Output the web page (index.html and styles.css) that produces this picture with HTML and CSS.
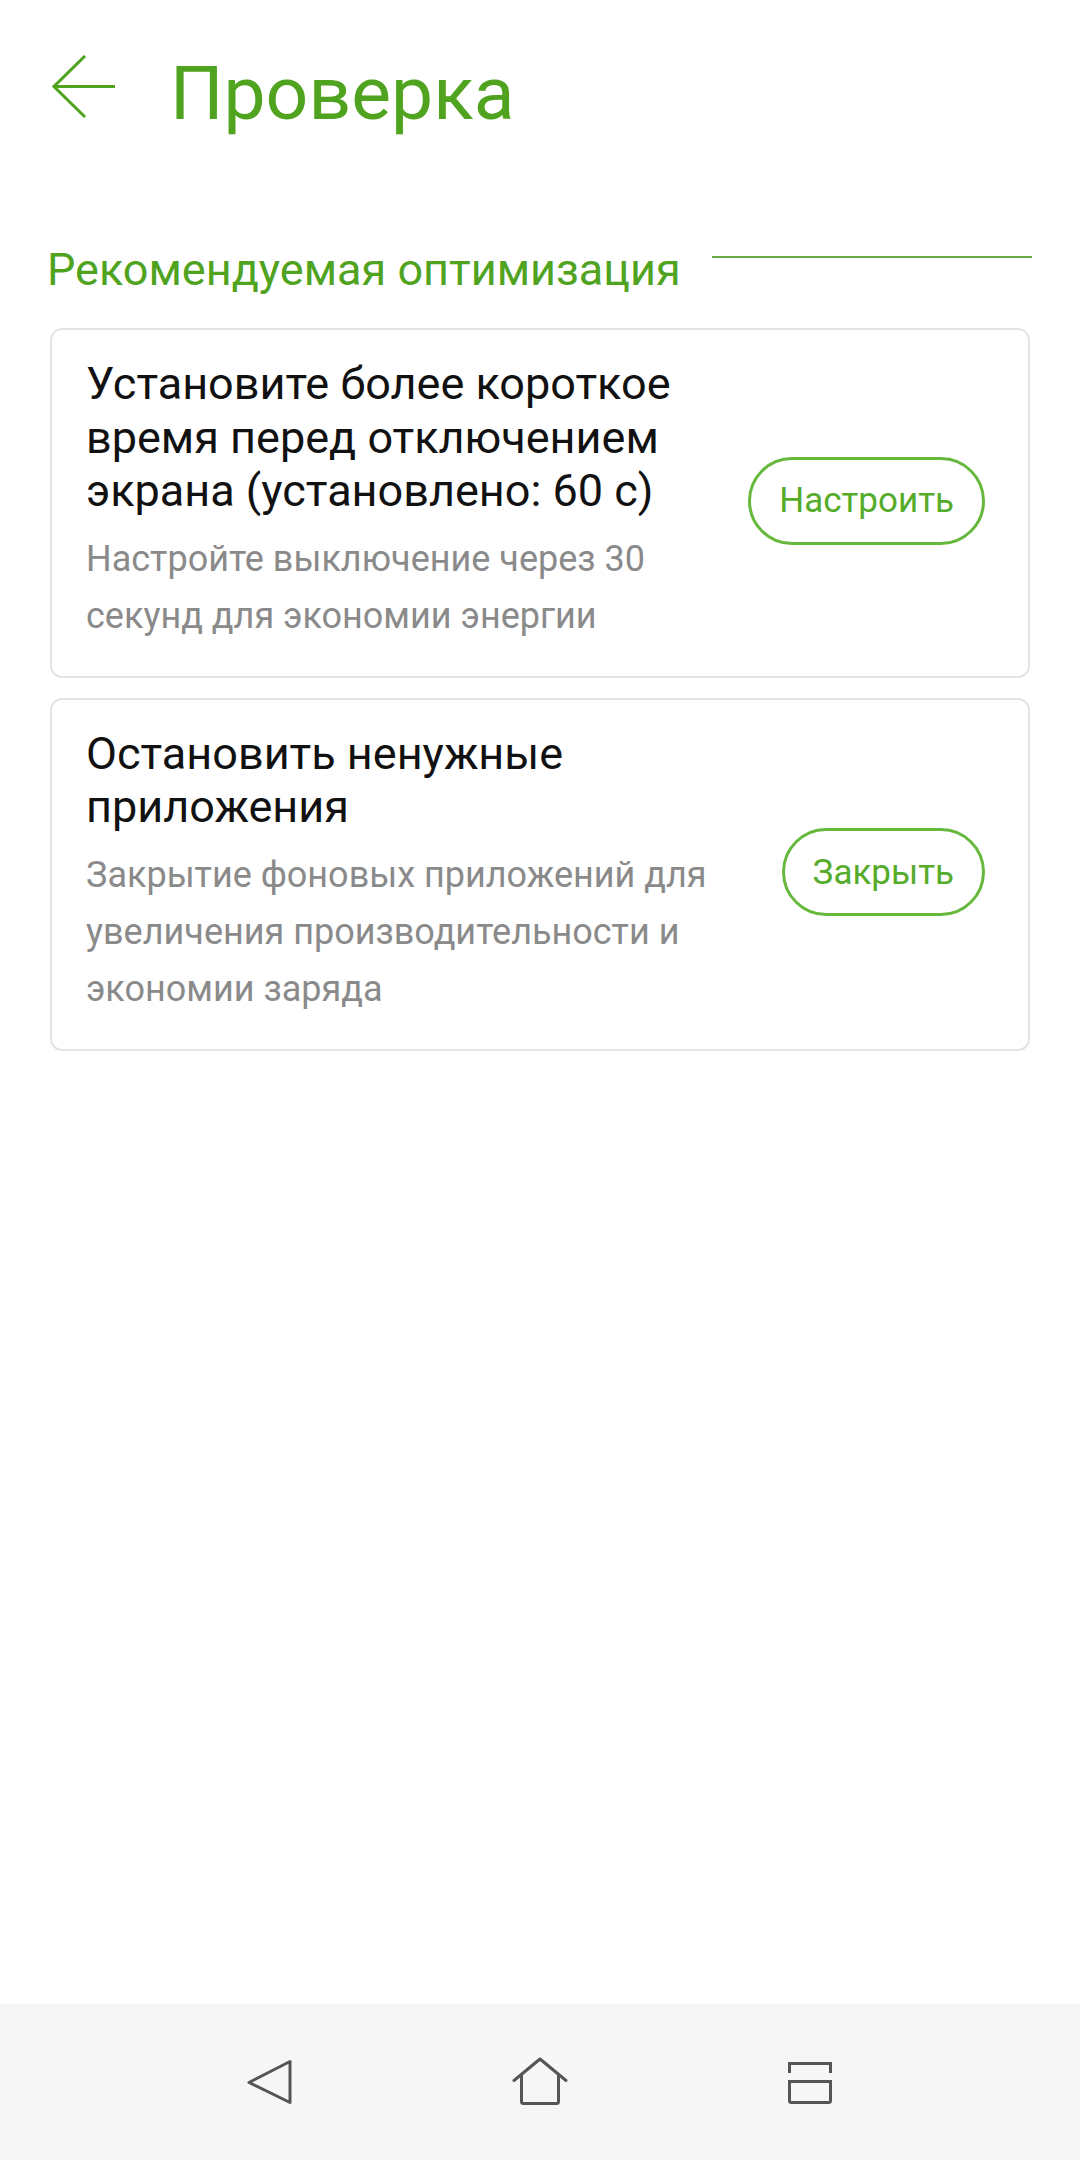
FILE: index.html
```html
<!DOCTYPE html>
<html lang="ru">
<head>
    <meta charset="UTF-8">
    <meta name="viewport" content="width=device-width, initial-scale=1.0">
    <title>Проверка</title>
    <link rel="stylesheet" href="styles.css">
</head>
<body>
    <header class="toolbar">
        <svg class="back" width="64" height="64" viewBox="0 0 64 64" fill="none" stroke="currentColor" stroke-width="3">
            <path d="M33 1L2 31.5L33 62"/>
            <path d="M2 31.5H63"/>
        </svg>
        <h1 class="title">Проверка</h1>
    </header>

    <main>
        <div class="section-head">
            <span class="section-title">Рекомендуемая оптимизация</span>
            <span class="section-line"></span>
        </div>

        <div class="card">
            <div class="card-text">
                <div class="card-title">Установите более короткое время перед отключением экрана (установлено: 60 с)</div>
                <div class="card-desc">Настройте выключение через 30 секунд для экономии энергии</div>
            </div>
            <button class="pill">Настроить</button>
        </div>

        <div class="card">
            <div class="card-text">
                <div class="card-title">Остановить ненужные приложения</div>
                <div class="card-desc">Закрытие фоновых приложений для увеличения производительности и экономии заряда</div>
            </div>
            <button class="pill">Закрыть</button>
        </div>
    </main>

    <nav class="navbar">
        <div class="nav-btn">
            <svg width="60" height="60" viewBox="0 0 60 60" fill="none" stroke="currentColor" stroke-width="3" stroke-linejoin="round">
                <path d="M9 30.5L50 9.5V50.5Z"/>
            </svg>
        </div>
        <div class="nav-btn">
            <svg width="60" height="60" viewBox="0 0 60 60" fill="none" stroke="currentColor" stroke-width="3" stroke-linejoin="round" stroke-linecap="round">
                <path d="M4 28.5L30 7L56 28.5"/>
                <path d="M11.5 23V49.5Q11.5 51.5 13.5 51.5H46.5Q48.5 51.5 48.5 49.5V23"/>
            </svg>
        </div>
        <div class="nav-btn">
            <svg width="60" height="60" viewBox="0 0 60 60" fill="none" stroke="currentColor" stroke-width="3">
                <path d="M9.5 21V11.5H50.5V21"/>
                <path d="M9.5 29.5H50.5V48.5Q50.5 50.5 48.5 50.5H11.5Q9.5 50.5 9.5 48.5Z"/>
            </svg>
        </div>
    </nav>
</body>
</html>
```

FILE: styles.css
```css
body {
    font-family: Roboto, "Noto Sans", sans-serif;
    background-color: #fff;
    color: #111;
    margin: 0;
    padding: 0;
    width: 1080px;
    height: 2160px;
    display: flex;
    flex-direction: column;
}
.toolbar {
    height: 174px;
    flex-shrink: 0;
    display: flex;
    align-items: center;
    padding-left: 52px;
    color: #4fa31f;
}
.back {
    flex-shrink: 0;
}
.title {
    margin: 12px 0 0 54px;
    font-size: 75px;
    font-weight: normal;
    line-height: 80px;
}
main {
    flex-grow: 1;
}
.section-head {
    display: flex;
    align-items: center;
    margin: 66px 48px 28px 47px;
    height: 60px;
}
.section-title {
    font-size: 45px;
    line-height: 60px;
    color: #4fa31f;
}
.section-line {
    flex-grow: 1;
    height: 2px;
    margin: 0 0 26px 31px;
    background-color: #6aa94a;
}
.card {
    display: flex;
    align-items: center;
    margin: 0 50px 20px;
    padding: 27px 43px 31px 34px;
    border: 2px solid #e4e4e4;
    border-radius: 12px;
}
.card-text {
    flex-grow: 1;
    margin-right: 60px;
}
.card-title {
    font-size: 45px;
    line-height: 53.5px;
    color: #111;
}
.card-desc {
    margin-top: 13px;
    font-size: 36px;
    line-height: 57px;
    color: #8a8a8a;
}
.pill {
    flex-shrink: 0;
    height: 88px;
    padding: 0 28px;
    font-family: Roboto, sans-serif;
    font-size: 35px;
    color: #55ab2a;
    background-color: #fff;
    border: 3px solid #66b83c;
    border-radius: 44px;
}
.navbar {
    height: 156px;
    flex-shrink: 0;
    background-color: #f6f6f6;
    display: flex;
    justify-content: center;
    align-items: center;
    gap: 210px;
    color: #555;
}
.nav-btn {
    width: 60px;
    height: 60px;
}
```
